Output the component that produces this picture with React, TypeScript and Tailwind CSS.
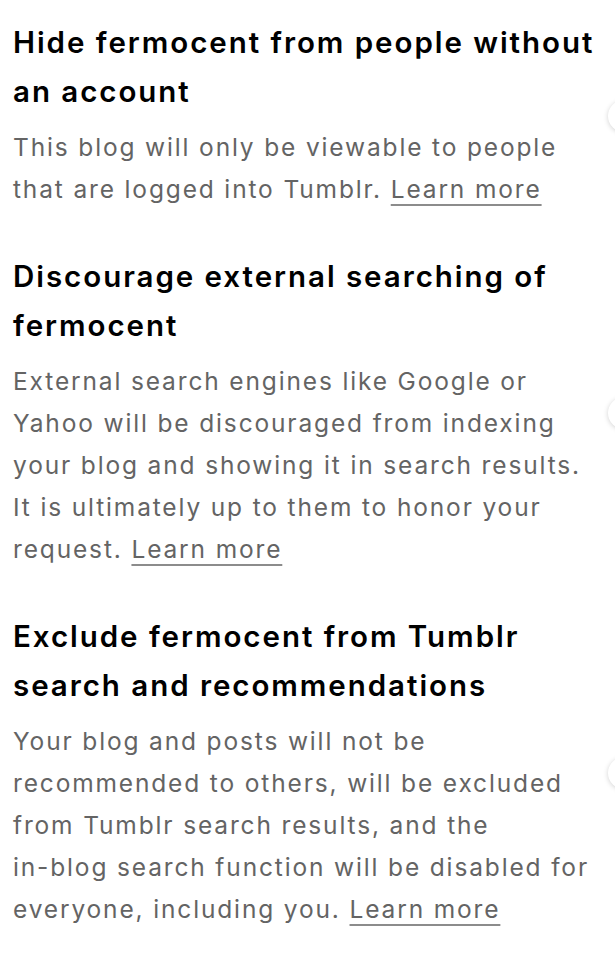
import type { ReactNode } from "react";

const SECTIONS: { title: string; body: ReactNode }[] = [
  {
    title: "Hide fermocent from people without an account",
    body: "This blog will only be viewable to people that are logged into Tumblr.",
  },
  {
    title: "Discourage external searching of fermocent",
    body: "External search engines like Google or Yahoo will be discouraged from indexing your blog and showing it in search results. It is ultimately up to them to honor your request.",
  },
  {
    title: "Exclude fermocent from Tumblr search and recommendations",
    body: (
      <>
        Your blog and posts will not be
        <br />
        recommended to others, will be excluded
        <br />
        from Tumblr search results, and the
        <br />
        in-blog search function will be disabled for
        <br />
        everyone, including you.
      </>
    ),
  },
];

export default function App() {
  return (
    <main className="min-h-[960px] w-[615px] overflow-hidden bg-white pt-[18px] font-[Inter,'Noto_Sans',sans-serif]">
      <div className="flex flex-col gap-[42px]">
        {SECTIONS.map((s) => (
          <Row key={s.title} title={s.title} body={s.body} />
        ))}
      </div>
    </main>
  );
}

function Row({ title, body }: { title: string; body: ReactNode }) {
  return (
    <section className="flex w-[700px] items-center pl-[13px]">
      <div className="w-[588px] shrink-0">
        <h2 className="text-[29.5px] font-semibold leading-[49px] tracking-[1.95px] text-black">{title}</h2>
        <p className="mt-[10px] w-[584px] text-[24.5px] leading-[42px] tracking-[1.85px] text-[#646464]">
          {body}{" "}
          <a href="#" className="underline decoration-[#8c8c8c] decoration-2 underline-offset-[6px]">
            Learn more
          </a>
        </p>
      </div>
      {/* switch knob, mostly clipped by the viewport */}
      <div className="ml-[7px] mt-[4px] h-[32px] w-[56px] shrink-0">
        <div className="h-[32px] w-[32px] rounded-full bg-white shadow-[0_1px_5px_rgba(0,0,0,0.18)]" />
      </div>
    </section>
  );
}
